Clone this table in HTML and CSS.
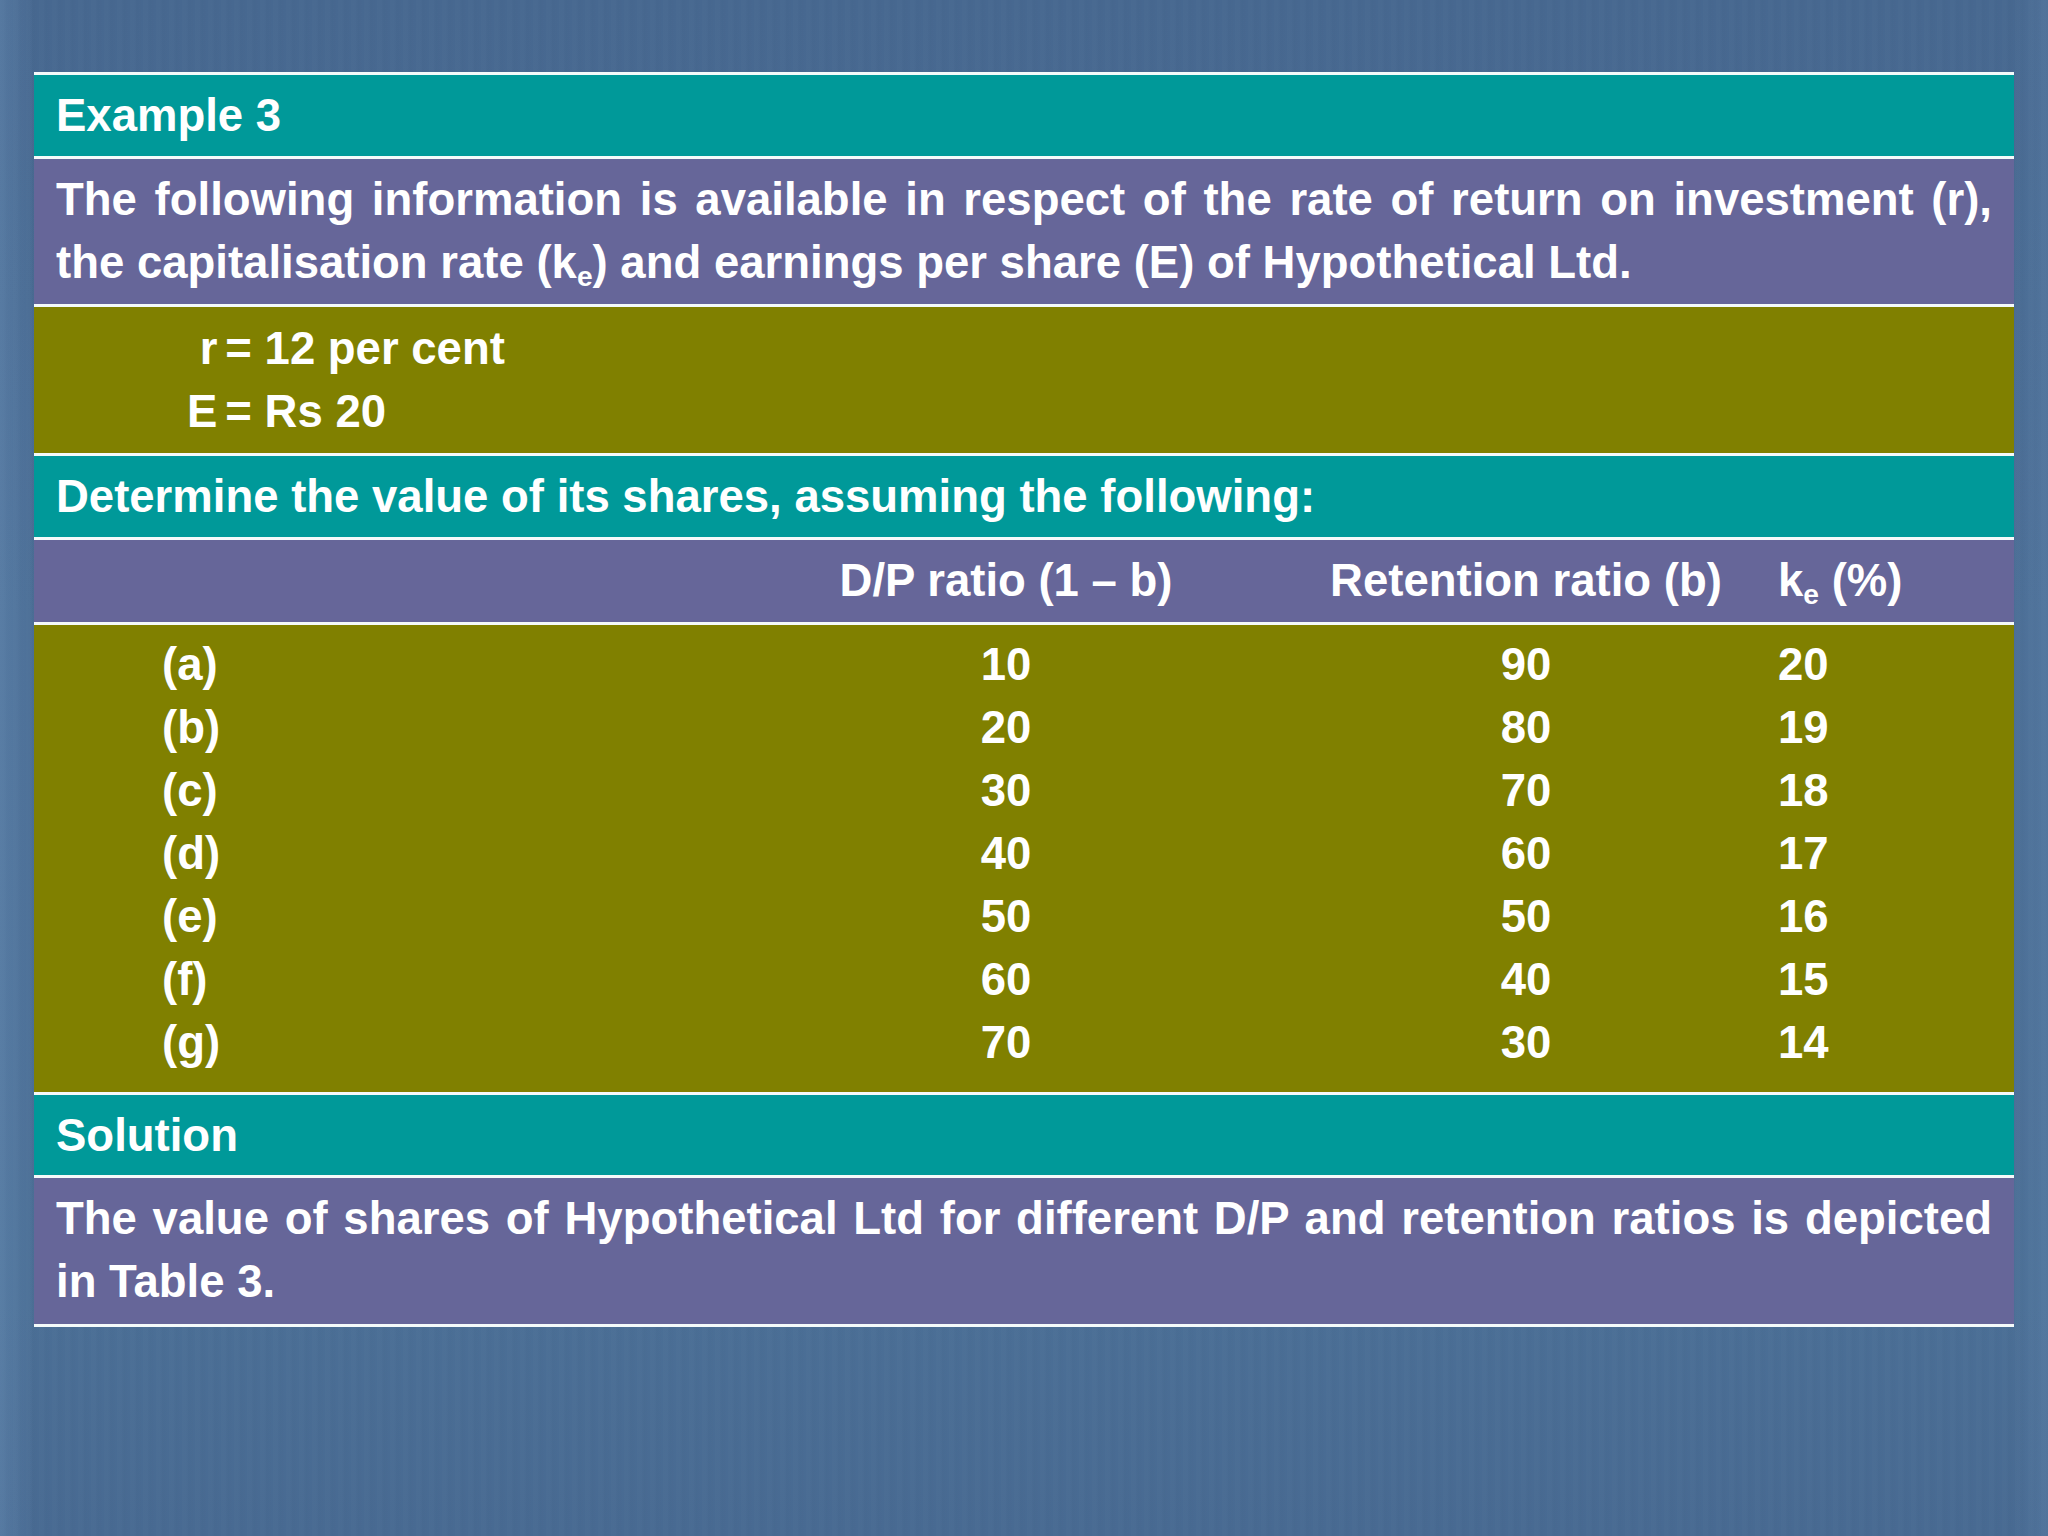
FILE: index.html
```html
<!DOCTYPE html>
<html lang="en">
<head>
<meta charset="utf-8">
<title>Example 3</title>
<link rel="stylesheet" href="styles.css">
</head>
<body>
<main class="slide">
  <section class="sheet">
    <div class="band teal">
      <p class="line">Example 3</p>
    </div>
    <div class="band purple two">
      <p class="para">
        <span class="just-line">The following information is available in respect of the rate of return on investment (r),</span>
        <span class="last-line">the capitalisation rate (k<sub>e</sub>) and earnings per share (E) of Hypothetical Ltd.</span>
      </p>
    </div>
    <div class="band olive two givens">
      <span class="var">r</span><span class="eq">= 12 per cent</span>
      <span class="var">E</span><span class="eq">= Rs 20</span>
    </div>
    <div class="band teal">
      <p class="line">Determine the value of its shares, assuming the following:</p>
    </div>
    <div class="band purple head">
      <div class="grid">
        <span></span>
        <span class="c">D/P ratio (1 – b)</span>
        <span class="c">Retention ratio (b)</span>
        <span class="l">k<sub>e</sub> (%)</span>
      </div>
    </div>
    <div class="band olive rows">
      <div class="grid">
        <span>(a)</span><span class="c">10</span><span class="c">90</span><span class="l">20</span>
        <span>(b)</span><span class="c">20</span><span class="c">80</span><span class="l">19</span>
        <span>(c)</span><span class="c">30</span><span class="c">70</span><span class="l">18</span>
        <span>(d)</span><span class="c">40</span><span class="c">60</span><span class="l">17</span>
        <span>(e)</span><span class="c">50</span><span class="c">50</span><span class="l">16</span>
        <span>(f)</span><span class="c">60</span><span class="c">40</span><span class="l">15</span>
        <span>(g)</span><span class="c">70</span><span class="c">30</span><span class="l">14</span>
      </div>
    </div>
    <div class="band teal sol">
      <p class="line">Solution</p>
    </div>
    <div class="band purple two last">
      <p class="para">
        <span class="just-line">The value of shares of Hypothetical Ltd for different D/P and retention ratios is depicted</span>
        <span class="last-line">in Table 3.</span>
      </p>
    </div>
  </section>
</main>
</body>
</html>
```

FILE: styles.css
```css
* { box-sizing: border-box; }

html, body {
  margin: 0;
  padding: 0;
}

body {
  width: 2048px;
  height: 1536px;
  overflow: hidden;
  background-color: #4a6d94;
  background-image:
    linear-gradient(90deg, rgba(120,160,200,0.28) 0px, rgba(120,160,200,0.12) 20px, rgba(0,0,0,0) 34px),
    linear-gradient(270deg, rgba(120,160,200,0.18) 0px, rgba(0,0,0,0) 34px),
    repeating-linear-gradient(90deg, rgba(255,255,255,0.012) 0px, rgba(255,255,255,0.012) 4px, rgba(0,0,0,0.01) 7px, rgba(0,0,0,0) 13px),
    linear-gradient(180deg, #476890 0%, #4b6e96 40%, #4b6f96 85%, #486a92 100%);
  font-family: "Liberation Sans", Arial, sans-serif;
  font-weight: bold;
  color: #ffffff;
}

.slide {
  padding: 72px 34px 0 34px;
}

.sheet {
  width: 1980px;
  display: flex;
  flex-direction: column;
}

.band {
  border-top: 3px solid #f4fafa;
  font-size: 45.5px;
  line-height: 63px;
  padding: 9px 22px;
}

.band.last {
  border-bottom: 3px solid #f4fafa;
}

.teal { background: #009999; }
.purple { background: #666699; }
.olive { background: #808000; }

.two { padding-top: 10px; padding-bottom: 10px; }
.purple.two { padding-top: 9px; padding-bottom: 10px; }
.purple.two.last { padding-top: 9px; padding-bottom: 11px; }

.sol { padding-top: 9px; padding-bottom: 8px; }

p { margin: 0; }

.line { white-space: nowrap; }

.para span { display: block; }

.just-line {
  text-align: justify;
  text-align-last: justify;
}

sub {
  font-size: 0.62em;
  line-height: 0;
  vertical-align: -0.28em;
}

/* givens */
.givens {
  display: grid;
  grid-template-columns: auto 1fr;
  column-gap: 8px;
  padding-left: 153px;
}

.givens .var { text-align: right; }

/* table header and rows */
.head { padding-top: 9px; padding-bottom: 10px; padding-left: 128px; padding-right: 0; }
.rows { padding-top: 8px; padding-bottom: 18px; padding-left: 128px; padding-right: 0; }

.grid {
  display: grid;
  grid-template-columns: 576px 536px 504px 1fr;
}

.grid .c { text-align: center; }
.grid .l { text-align: left; }
```
